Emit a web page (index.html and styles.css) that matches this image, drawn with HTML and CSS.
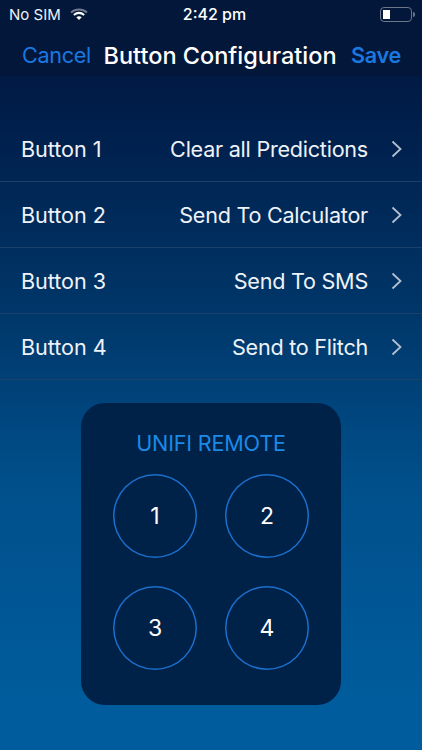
FILE: index.html
```html
<!DOCTYPE html>
<html lang="en">
<head>
<meta charset="utf-8">
<title>Button Configuration</title>
<link rel="stylesheet" href="styles.css">
</head>
<body>
<div class="screen">
  <header class="top">
    <div class="status">
      <div class="status-left">
        <span>No SIM</span>
        <svg class="wifi" width="18" height="13" viewBox="0 0 18 13"><path d="M1 4.4C5.6.4 12.4.4 17 4.4" fill="none" stroke="#6f7a8c" stroke-width="2"/><path d="M3.8 7C7 4.4 11 4.4 14.2 7" fill="none" stroke="#fff" stroke-width="2"/><path d="M6.3 9.3C8 8 10 8 11.7 9.3L9 12Z" fill="#fff"/></svg>
      </div>
      <span class="time">2:42 pm</span>
      <div class="status-right">
        <div class="battery"><div class="battery-fill"></div></div>
        <div class="battery-tip"></div>
      </div>
    </div>
    <nav class="nav">
      <span class="nav-link">Cancel</span>
      <span class="nav-title">Button Configuration</span>
      <span class="nav-link nav-save">Save</span>
    </nav>
  </header>
  <main class="list">
    <div class="row"><span>Button 1</span><span class="value">Clear all Predictions</span><svg class="chev" width="11" height="18" viewBox="0 0 11 18"><path d="M1.5 1.5 9.5 9l-8 7.5" fill="none" stroke="#b4c0d2" stroke-width="1.8"/></svg></div>
    <div class="row"><span>Button 2</span><span class="value">Send To Calculator</span><svg class="chev" width="11" height="18" viewBox="0 0 11 18"><path d="M1.5 1.5 9.5 9l-8 7.5" fill="none" stroke="#b4c0d2" stroke-width="1.8"/></svg></div>
    <div class="row"><span>Button 3</span><span class="value">Send To SMS</span><svg class="chev" width="11" height="18" viewBox="0 0 11 18"><path d="M1.5 1.5 9.5 9l-8 7.5" fill="none" stroke="#b4c0d2" stroke-width="1.8"/></svg></div>
    <div class="row"><span>Button 4</span><span class="value">Send to Flitch</span><svg class="chev" width="11" height="18" viewBox="0 0 11 18"><path d="M1.5 1.5 9.5 9l-8 7.5" fill="none" stroke="#b4c0d2" stroke-width="1.8"/></svg></div>
  </main>
  <section class="remote">
    <h2 class="remote-title">UNIFI REMOTE</h2>
    <div class="pad">
      <div class="key">1</div>
      <div class="key">2</div>
      <div class="key">3</div>
      <div class="key">4</div>
    </div>
  </section>
</div>
</body>
</html>
```
FILE: styles.css
```css
* { box-sizing: border-box; }
html, body { margin: 0; padding: 0; }
body { width: 422px; height: 750px; overflow: hidden; font-family: Inter, "Liberation Sans", sans-serif; color: #fff; }
.screen { width: 422px; height: 750px; display: flex; flex-direction: column; background: linear-gradient(180deg, #001a44 76px, #001f4c 130px, #003567 300px, #004f8a 480px, #005c9c 700px, #005c9c 100%); }
.top { height: 76px; background: #03173a; display: flex; flex-direction: column; }
.status { height: 28px; display: grid; grid-template-columns: 1fr auto 1fr; align-items: center; padding: 0 7px 0 9px; font-size: 15px; }
.status-left { display: flex; align-items: center; gap: 9px; color: #eef1f5; }
.wifi { display: block; margin-top: 1px; }
.time { font-weight: 500; font-size: 16px; margin-left: 5px; }
.status-right { display: flex; align-items: center; justify-content: flex-end; gap: 1px; }
.battery { width: 32px; height: 15px; border: 1.5px solid #6c7688; border-radius: 4px; padding: 2px; }
.battery-fill { width: 7px; height: 100%; background: #fff; }
.battery-tip { width: 2px; height: 5px; background: #6c7688; border-radius: 0 2px 2px 0; }
.nav { height: 48px; display: flex; align-items: center; padding: 6px 21px 0 22px; justify-content: space-between; font-size: 21.6px; }
.nav-link { color: #1a78e0; letter-spacing: -.3px; }
.nav-save { font-weight: 600; }
.nav-title { font-size: 23.5px; font-weight: 500; color: #fff; margin-right: 2px; }
.list { margin-top: 40px; }
.row { height: 66px; display: flex; align-items: center; padding: 0 20px 0 21px; gap: 24px; border-bottom: 1px solid #1b4069; font-size: 21.6px; color: #eef2f7; letter-spacing: -.05px; }
.value { margin-left: auto; letter-spacing: -.25px; }
.chev { display: block; flex: none; margin-left: -1px; }
.remote { width: 260px; height: 302px; margin: 23px 0 0 81px; background: #002148; border-radius: 24px; display: flex; flex-direction: column; align-items: center; padding-top: 28px; }
.remote-title { margin: 0; font-size: 21.6px; font-weight: 400; line-height: 24px; color: #1c8ae6; letter-spacing: -.2px; }
.pad { margin-top: 19px; display: grid; grid-template-columns: 84px 84px; gap: 28px; }
.key { width: 84px; height: 84px; box-shadow: inset 0 0 0 1.5px #1a70cc; border-radius: 50%; display: flex; align-items: center; justify-content: center; font-size: 23px; color: #fff; }
```
